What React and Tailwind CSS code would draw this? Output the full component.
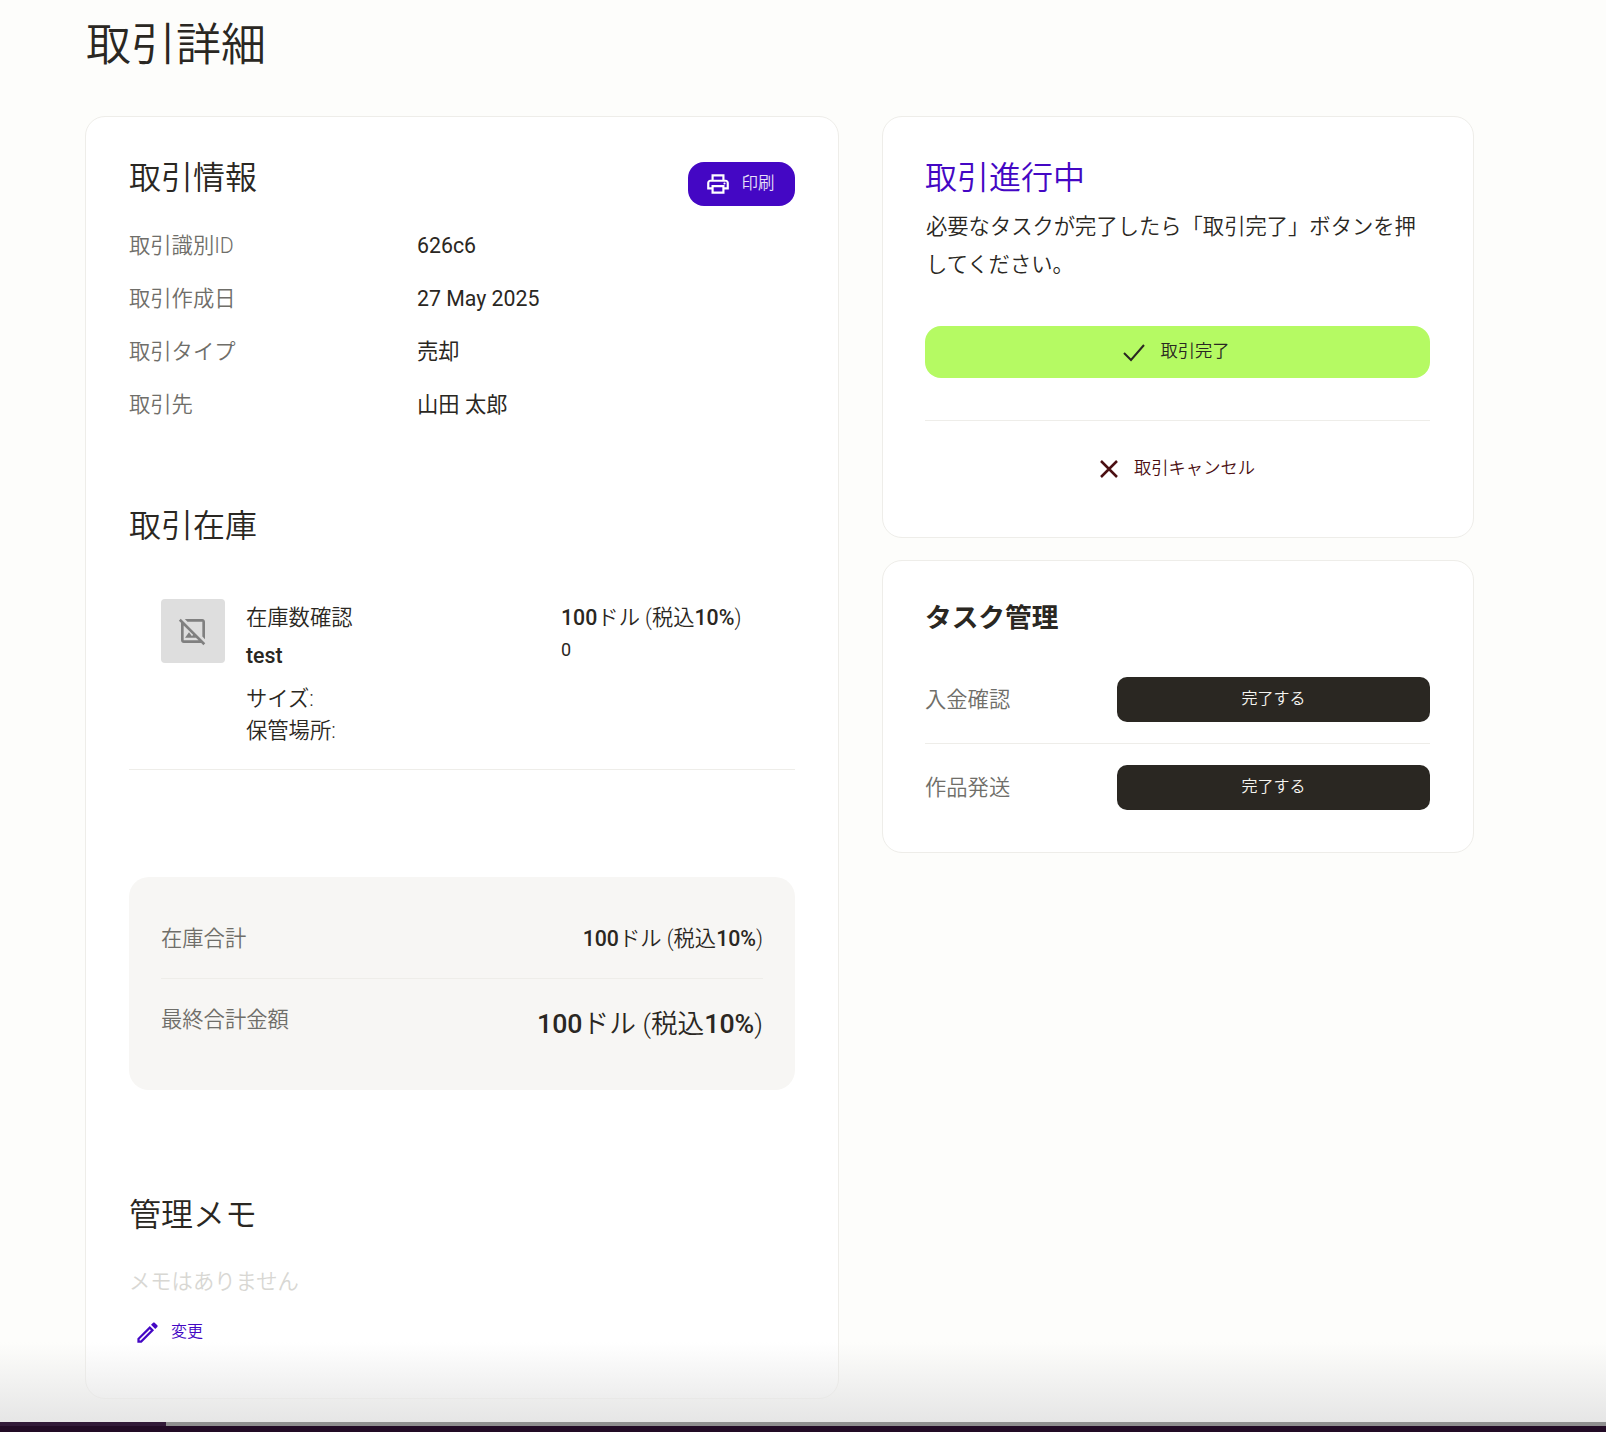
import React from "react";
import { MdOutlinePrint, MdOutlineHideImage, MdOutlineEdit } from "react-icons/md";

const jp = "font-['Roboto','Noto_Sans_CJK_JP',sans-serif]";

function InfoRow({ label, value }) {
  return (
    <div className="flex items-center h-[53px]">
      <div className="w-[288px] text-[21.3px] font-[350] text-[#6f6e69]">{label}</div>
      <div className="text-[21.3px] text-[#2a2722]">{value}</div>
    </div>
  );
}

function TaskRow({ label }) {
  return (
    <div className="flex items-center justify-between">
      <span className="text-[21.3px] font-[350] text-[#6f6e69]">{label}</span>
      <button className="w-[313px] h-[45px] pb-[2px] rounded-[10px] bg-[#2a2722] text-[16px] font-[350] text-[#f5f4f0]">完了する</button>
    </div>
  );
}

export default function App() {
  return (
    <div className={"relative h-[1432px] w-full overflow-hidden bg-[#fdfdfb] " + jp}>
      <div className="px-[85px]">
        <h1 className="pt-[16px] pl-[1px] text-[45px] leading-[60px] font-[350] text-[#2a2722]">取引詳細</h1>
        <div className="mt-[40px] flex items-start gap-[43px]">
          {/* left */}
          <div className="w-[754px] rounded-[20px] border border-[#eeede9] bg-white px-[43px] pt-[35px] pb-[51px]">
            <div className="flex items-start justify-between">
              <h2 className="text-[32px] leading-[52px] font-[350] text-[#2a2722]">取引情報</h2>
              <button className="mt-[10px] flex h-[44px] w-[107px] items-center justify-center gap-[11px] rounded-[16px] bg-[#4407c4] pr-[4px] text-[16.5px] font-[350] text-white">
                <MdOutlinePrint className="text-[26px]" />
                <span className="text-[#e8e0f8]">印刷</span>
              </button>
            </div>
            <div className="mt-[13px]">
              <InfoRow label="取引識別ID" value="626c6" />
              <InfoRow label="取引作成日" value="27 May 2025" />
              <InfoRow label="取引タイプ" value="売却" />
              <InfoRow label="取引先" value="山田 太郎" />
            </div>

            <h2 className="mt-[69px] text-[32px] leading-[52px] font-[350] text-[#2a2722]">取引在庫</h2>
            <div className="mt-[47px] flex border-b border-[#eeede9] pl-[32px] pb-[22px]">
              <div className="flex h-[64px] w-[64px] shrink-0 items-center justify-center rounded-[4px] bg-[#dedede]">
                <MdOutlineHideImage className="text-[32px] text-[#808080]" />
              </div>
              <div className="ml-[21px] w-[315px] text-[21.3px] font-[350] text-[#2a2722]">
                <div className="leading-[38px]">在庫数確認</div>
                <div className="leading-[38px] font-medium">test</div>
                <div className="mt-[8px] leading-[32px]">サイズ:</div>
                <div className="leading-[32px]">保管場所:</div>
              </div>
              <div className="text-[#2a2722]">
                <div className="text-[21.3px] font-[350] leading-[38px]"><span className="font-medium">100</span>ドル (税込<span className="font-medium">10%</span>)</div>
                <div className="text-[18px] leading-[26px]">0</div>
              </div>
            </div>

            <div className="mt-[107px] rounded-[20px] bg-[#f7f6f4] px-[32px] pt-[44px] pb-[44px]">
              <div className="flex items-center justify-between border-b border-[#eeede9] pb-[21px]">
                <span className="text-[21.3px] font-[350] leading-[36px] text-[#6f6e69]">在庫合計</span>
                <span className="text-[21.3px] font-[350] leading-[36px] text-[#2a2722]"><span className="font-medium">100</span>ドル (税込<span className="font-medium">10%</span>)</span>
              </div>
              <div className="mt-[23px] flex items-start justify-between">
                <span className="text-[21.3px] font-[350] leading-[36px] text-[#6f6e69]">最終合計金額</span>
                <span className="text-[26.7px] font-[350] leading-[44px] text-[#2a2722]"><span className="font-medium">100</span>ドル (税込<span className="font-medium">10%</span>)</span>
              </div>
            </div>

            <h2 className="mt-[99px] text-[32px] leading-[52px] font-[350] text-[#2a2722]">管理メモ</h2>
            <div className="mt-[23px] text-[21.3px] font-[350] leading-[36px] text-[#d8d7d3]">メモはありません</div>
            <button className="mt-[17px] flex items-center gap-[10px] pl-[5px] text-[16px] font-[350] leading-[30px] text-[#4407c4]">
              <MdOutlineEdit className="text-[27px]" />
              <span>変更</span>
            </button>
          </div>

          {/* right */}
          <div className="flex w-[592px] flex-col gap-[22px]">
            <div className="rounded-[20px] border border-[#eeede9] bg-white pl-[42px] pr-[43px] pt-[35px] pb-[53px]">
              <h2 className="text-[32px] leading-[52px] font-[350] text-[#4407c4]">取引進行中</h2>
              <p className="mt-[4px] pl-[1px] text-[21.3px] leading-[37.5px] font-[350] text-[#2a2722]">必要なタスクが完了したら「取引完了」ボタンを押してください。</p>
              <button className="mt-[43px] flex h-[52px] w-full items-center justify-center gap-[14px] rounded-[16px] bg-[#b5fa63] pr-[3px] text-[17.3px] font-[350] text-[#2a2722]">
                <svg width="24" height="24" viewBox="0 0 24 24" fill="none" stroke="currentColor" strokeWidth="2"><path d="M2 13l7 7L22 5" /></svg>
                <span>取引完了</span>
              </button>
              <div className="mt-[42px] border-t border-[#eeede9]" />
              <button className="mt-[33px] flex h-[30px] w-full items-center justify-center gap-[14px] pr-[2px] text-[17.3px] font-[350] text-[#4b0f12]">
                <svg width="22" height="22" viewBox="0 0 22 22" fill="none" stroke="currentColor" strokeWidth="2.5"><path d="M3 3l16 16M19 3L3 19" /></svg>
                <span>取引キャンセル</span>
              </button>
            </div>
            <div className="rounded-[20px] border border-[#eeede9] bg-white pl-[42px] pr-[43px] pt-[37px] pb-[42px]">
              <h3 className="text-[26.7px] leading-[40px] font-bold text-[#2a2722]">タスク管理</h3>
              <div className="mt-[39px]"><TaskRow label="入金確認" /></div>
              <div className="my-[21px] border-t border-[#eeede9]" />
              <TaskRow label="作品発送" />
            </div>
          </div>
        </div>
        {/* next card, cut off by the window */}
        <div className="mt-[22px] h-[40px] w-[754px] rounded-t-[20px] border border-[#dcdcdc] bg-white" />
      </div>

      {/* fade and bar over the page */}
      <div className="absolute inset-x-0 bottom-[10px] h-[80px] bg-gradient-to-b from-transparent to-[#e6e6e6]" />
      <div className="absolute inset-x-0 bottom-0 h-[10px] bg-[#220b25]">
        <div className="flex h-[4px]">
          <div className="w-[166px] bg-[#321a38]" />
          <div className="flex-1 bg-[#8f8f8f]" />
        </div>
      </div>
    </div>
  );
}
